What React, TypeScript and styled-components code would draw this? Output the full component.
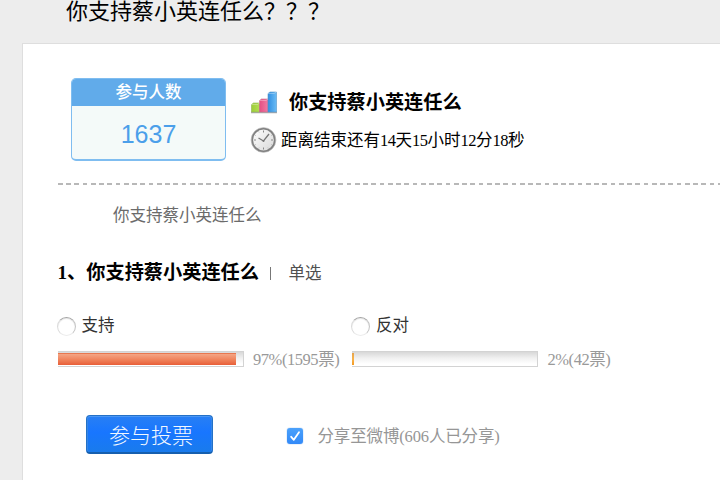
import React from 'react';
import styled, { createGlobalStyle } from 'styled-components';

const GlobalStyle = createGlobalStyle`
  *, *::before, *::after { box-sizing: border-box; }
  html, body { margin: 0; padding: 0; overflow: hidden; }
  body {
    background: #ededed;
    color: #000;
    font-family: 'Liberation Serif', 'Noto Sans CJK SC', serif;
    font-size: 16.5px;
  }
  h1, h2, h3, p { margin: 0; }
`;

const Page = styled.div`
  width: 720px;
  height: 480px;
  overflow: hidden;
  display: flex;
  flex-direction: column;
  white-space: nowrap;
`;

const PageTitle = styled.h1`
  height: 43px;
  flex: none;
  padding-left: 66px;
  font-size: 22px;
  font-weight: 400;
  line-height: 23px;
`;

const Card = styled.main`
  flex: 1;
  width: 760px;
  margin-left: 22px;
  padding: 34px 0 0 34.5px;
  background: #fff;
  border: 1px solid #dedede;
  border-width: 1px 0 0 1px;
`;

const Summary = styled.header`
  display: flex;
  height: 105px;
  padding-left: 13.5px;
`;

const CountBox = styled.section`
  width: 155px;
  height: 83px;
  border: 1px solid #7fbdf0;
  border-bottom-width: 2px;
  border-radius: 5px;
  overflow: hidden;
  background: #f4faf9;
`;

const CountLabel = styled.div`
  height: 27px;
  background: #61abea;
  color: #fff;
  font-weight: 500;
  line-height: 27px;
  text-align: center;
`;

const CountValue = styled.div`
  color: #4b9fea;
  font-family: 'Liberation Sans', sans-serif;
  font-size: 25px;
  line-height: 56px;
  text-align: center;
`;

const Details = styled.div`
  padding: 11px 0 0 24px;
`;

const DetailRow = styled.div<{ $height: number; $gap: number }>`
  display: flex;
  align-items: center;
  height: ${(p) => p.$height}px;
  gap: ${(p) => p.$gap}px;
`;

const PollName = styled.h2`
  font-size: 19.2px;
  font-weight: 700;
  line-height: 26px;
`;

const Countdown = styled.span`
  padding-bottom: 2px;
`;

const Digits = styled.span`
  letter-spacing: -0.5px;
`;

const Divider = styled.div`
  height: 2px;
  background: repeating-linear-gradient(90deg, #b8b8b8 0 4.6px, transparent 4.6px 8.25px);
`;

const Description = styled.p`
  margin-top: 19px;
  padding-left: 55.5px;
  color: #6b6b6b;
  line-height: 24px;
`;

const Question = styled.div`
  display: flex;
  align-items: center;
  height: 30px;
  margin-top: 30px;
`;

const QuestionTitle = styled.h3`
  font-size: 19.2px;
  font-weight: 700;
  line-height: 28px;
`;

const Separator = styled.span`
  width: 1px;
  height: 13px;
  margin: 0 17.5px 0 11px;
  background: #777;
`;

const Kind = styled.span`
  padding-bottom: 2px;
  color: #505050;
`;

const Options = styled.div`
  display: grid;
  grid-template-columns: 294.5px 294.5px;
  margin-top: 24px;
`;

const OptionLabel = styled.label`
  display: flex;
  align-items: center;
  height: 26px;
  gap: 6px;
  color: #333;
`;

const OptionText = styled.span`
  padding-bottom: 2px;
`;

const Radio = styled.span`
  width: 19px;
  height: 19px;
  margin: 2px 0 0 -1px;
  border: 1px solid #c4c4c4;
  border-top-color: #a4a4a4;
  border-bottom-color: #ececec;
  border-left-color: #dadada;
  border-radius: 50%;
  box-shadow: inset 0 1px 1px #e4e4e4;
`;

const Result = styled.div`
  display: flex;
  align-items: center;
  height: 22px;
  margin-top: 10px;
  gap: 9.5px;
  color: #999;
  letter-spacing: -0.45px;
`;

const ResultText = styled.span`
  padding-bottom: 2px;
`;

const Track = styled.div`
  width: 186px;
  height: 16px;
  padding: 1px 1px 1px 0;
  border: solid #d3d3d3;
  border-width: 1px 1px 1px 0;
  background: linear-gradient(#d8d8d8, #f1f1f1 45%, #fff 85%);
`;

const Fill = styled.div<{ $tone: 'red' | 'amber' }>`
  height: 100%;
  background: ${(p) =>
    p.$tone === 'red'
      ? 'linear-gradient(#e8774f 0 8%, #f4a382 12%, #ef8058 60%, #e85f39)'
      : 'linear-gradient(#e5a34c, #f8b34b 50%, #f39a22)'};
`;

const Actions = styled.div`
  display: flex;
  align-items: center;
  margin-top: 45px;
  padding-left: 28.5px;
`;

const VoteButton = styled.button`
  width: 127px;
  height: 39px;
  padding: 0 0 0 3px;
  border: 1px solid #2471c7;
  border-bottom: 2px solid #165fae;
  border-radius: 4px;
  background: linear-gradient(#287ff4, #1876ff 45%, #197bec);
  box-shadow: inset 0 1px 0 #4b97f5, inset 1px 0 0 #3686e7, inset -1px 0 0 #3686e7;
  color: #f2f8ff;
  font: 300 21px/36px 'Noto Sans CJK SC', sans-serif;
`;

const Checkbox = styled.span`
  display: flex;
  width: 16px;
  height: 16px;
  margin: 2px 14.5px 0 74px;
  border-radius: 3px;
  background: linear-gradient(#4ba1fb, #3289f8);
  box-shadow: 0 0 1px #2879dc;
`;

const ShareText = styled.span`
  color: #969696;
  letter-spacing: -0.15px;
`;

const ChartIcon = () => (
  <svg width="28" height="24" viewBox="0 0 28 24">
    <defs>
      <linearGradient id="green" x2="1"><stop stopColor="#9dce38" /><stop offset="1" stopColor="#b5dc55" /></linearGradient>
      <linearGradient id="pink" x2="1"><stop stopColor="#e44f83" /><stop offset="1" stopColor="#f07ba4" /></linearGradient>
      <linearGradient id="blue" x2="1"><stop stopColor="#318fe1" /><stop offset="1" stopColor="#6bbcf5" /></linearGradient>
    </defs>
    <path d="M1 21.5h26" stroke="#aaa" strokeWidth="1.5" />
    <path d="M1.5 13.5l2-1.5h6v9h-8z" fill="url(#green)" stroke="#8fb254" strokeWidth=".6" />
    <path d="M9.5 9.5l2-1.5h6.5V21H9.5z" fill="url(#pink)" stroke="#c76c8b" strokeWidth=".6" />
    <path d="M18 2.5L20 1h6.5v20H18z" fill="url(#blue)" stroke="#5596c6" strokeWidth=".6" />
    <path d="M1.5 13.5h6l2-1.5M9.5 9.5H16l2-1.5M18 2.5h6L26.5 1" fill="none" stroke="#fff" strokeOpacity=".4" strokeWidth=".8" />
  </svg>
);

const ClockIcon = () => (
  <svg width="28" height="28" viewBox="0 0 28 28">
    <defs>
      <linearGradient id="face" x2="1" y2="1"><stop stopColor="#fff" /><stop offset="1" stopColor="#d8d8d8" /></linearGradient>
    </defs>
    <circle cx="13.5" cy="14" r="11.3" fill="url(#face)" stroke="#808080" strokeWidth="1.8" />
    <circle cx="13.5" cy="14" r="12.4" fill="none" stroke="#aaa" strokeWidth=".6" />
    <path d="M13.5 4.5v2M13.5 21.5v2M4 14h2M21 14h2" stroke="#888" />
    <path d="M8.5 5.3l.7 1.2M4.8 9l1.2.7M22.2 9l-1.2.7M4.8 19l1.2-.7M8.5 22.7l.7-1.2M18.5 22.7l-.7-1.2M22.2 19l-1.2-.7" stroke="#bbb" strokeWidth=".8" />
    <path d="M8.5 12l5 3 5.5-7" fill="none" stroke="#777" strokeWidth="1.3" />
    <circle cx="13.5" cy="15" r="1" fill="#777" />
  </svg>
);

const CheckIcon = () => (
  <svg width="16" height="16" viewBox="0 0 16 16">
    <path d="M4.2 8.8l2.6 3L12 4.3" fill="none" stroke="#fff" strokeWidth="1.8" strokeLinecap="round" strokeLinejoin="round" />
  </svg>
);

const subject = '你支持蔡小英连任么';

const options: { label: string; width: number; tone: 'red' | 'amber'; result: string }[] = [
  { label: '支持', width: 97, tone: 'red', result: '97%(1595票)' },
  { label: '反对', width: 1.2, tone: 'amber', result: '2%(42票)' },
];

export default function App() {
  return (
    <>
      <GlobalStyle />
      <Page>
        <PageTitle>{subject}？？？</PageTitle>
        <Card>
          <Summary>
            <CountBox>
              <CountLabel>参与人数</CountLabel>
              <CountValue>1637</CountValue>
            </CountBox>
            <Details>
              <DetailRow $height={27} $gap={11}>
                <ChartIcon />
                <PollName>{subject}</PollName>
              </DetailRow>
              <DetailRow $height={48} $gap={3}>
                <ClockIcon />
                <Countdown>
                  距离结束还有<Digits>14</Digits>天<Digits>15</Digits>小时<Digits>12</Digits>分<Digits>18</Digits>秒
                </Countdown>
              </DetailRow>
            </Details>
          </Summary>
          <Divider />
          <Description>{subject}</Description>
          <Question>
            <QuestionTitle>1、{subject}</QuestionTitle>
            <Separator />
            <Kind>单选</Kind>
          </Question>
          <Options>
            {options.map((o) => (
              <div key={o.label}>
                <OptionLabel>
                  <Radio />
                  <OptionText>{o.label}</OptionText>
                </OptionLabel>
                <Result>
                  <Track>
                    <Fill $tone={o.tone} style={{ width: `${o.width}%` }} />
                  </Track>
                  <ResultText>{o.result}</ResultText>
                </Result>
              </div>
            ))}
          </Options>
          <Actions>
            <VoteButton>参与投票</VoteButton>
            <Checkbox role="checkbox" aria-checked="true">
              <CheckIcon />
            </Checkbox>
            <ShareText>分享至微博(606人已分享)</ShareText>
          </Actions>
        </Card>
      </Page>
    </>
  );
}
